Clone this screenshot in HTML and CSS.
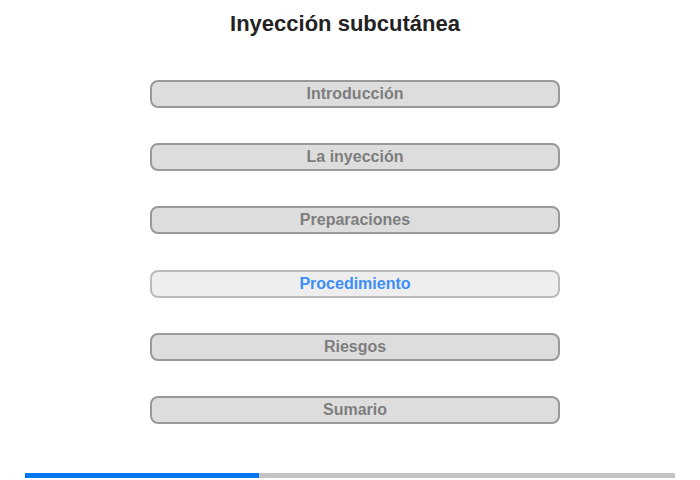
FILE: index.html
```html
<!DOCTYPE html>
<html lang="es">
<head>
    <meta charset="UTF-8">
    <meta name="viewport" content="width=device-width, initial-scale=1.0">
    <title>Inyección subcutánea</title>
    <link rel="stylesheet" href="styles.css">
</head>
<body>

    <div class="page">
        <h1>Inyección subcutánea</h1>

        <nav class="menu">
            <button class="menu-btn">Introducción</button>
            <button class="menu-btn">La inyección</button>
            <button class="menu-btn">Preparaciones</button>
            <button class="menu-btn active">Procedimiento</button>
            <button class="menu-btn">Riesgos</button>
            <button class="menu-btn">Sumario</button>
        </nav>

        <div class="progress">
            <div class="progress-fill" style="width: 36%"></div>
        </div>
    </div>

</body>
</html>
```

FILE: styles.css
```css
body {
    margin: 0;
    font-family: "Liberation Sans", Arial, sans-serif;
    background: white;
}
.page {
    display: flex;
    flex-direction: column;
    align-items: center;
    height: 480px;
    padding-top: 11px;
    box-sizing: border-box;
}
h1 {
    margin: 0 10px 0 0;
    font-size: 22px;
    line-height: 25px;
    color: #222;
}
.menu {
    display: flex;
    flex-direction: column;
    gap: 35.2px;
    margin: 44px 0 0 10px;
}
.menu-btn {
    width: 410px;
    height: 28px;
    padding: 0;
    border: 2px solid #999;
    border-radius: 8px;
    background: #ddd;
    color: #7d7d7d;
    font-family: inherit;
    font-size: 16px;
    font-weight: bold;
    cursor: pointer;
}
.menu-btn.active {
    background: #eee;
    border-color: #bbb;
    color: #3d8ef8;
}
.progress {
    width: 650px;
    height: 5px;
    margin-top: 49px;
    background: #c4c4c4;
}
.progress-fill {
    height: 100%;
    background: #0078f0;
}
```
